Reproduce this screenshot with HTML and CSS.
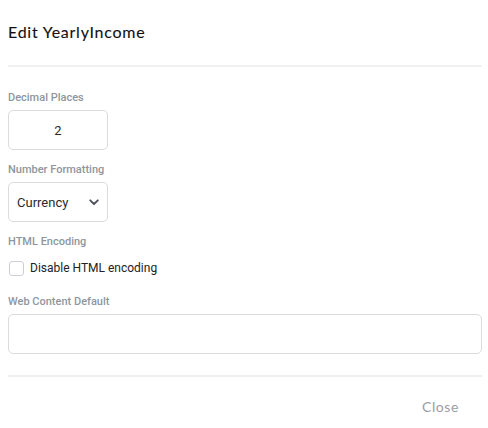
FILE: index.html
```html
<!DOCTYPE html>
<html>
<head>
<meta charset="utf-8">
<link rel="stylesheet" href="styles.css">
</head>
<body>
<div class="dialog">
  <div class="header">
    <h1 class="title">Edit YearlyIncome</h1>
  </div>
  <div class="content">
    <div class="field">
      <label class="label">Decimal Places</label>
      <div class="input small center">2</div>
    </div>
    <div class="field">
      <label class="label">Number Formatting</label>
      <div class="input small select">
        <span>Currency</span>
        <svg class="chev" width="10" height="7" viewBox="0 0 10 7"><path d="M1.2 1.3 L5 5 L8.8 1.3" fill="none" stroke="#4b5058" stroke-width="1.8" stroke-linecap="round" stroke-linejoin="round"/></svg>
      </div>
    </div>
    <div class="field">
      <label class="label">HTML Encoding</label>
      <div class="check-row">
        <span class="checkbox"></span>
        <span class="check-text">Disable HTML encoding</span>
      </div>
    </div>
    <div class="field last">
      <label class="label">Web Content Default</label>
      <div class="input wide"></div>
    </div>
  </div>
  <div class="footer">
    <button class="close">Close</button>
  </div>
</div>
</body>
</html>
```
FILE: styles.css
```css
html, body { margin: 0; padding: 0; background: #fff; }
.dialog { width: 474px; padding: 0 6px 0 8px; }
.header { padding: 22px 0 23px; border-bottom: 2px solid #f0f0f0; }
.title { margin: 0; font-family: "Lato", "Open Sans", sans-serif; font-weight: 400; font-size: 16px; letter-spacing: 0.75px; line-height: 20px; color: #111; -webkit-text-stroke: 0.1px #111; }
.content { padding: 24px 0 21px; border-bottom: 2px solid #f0f0f0; display: flex; flex-direction: column; gap: 13px; }
.field { display: flex; flex-direction: column; gap: 5px; }
.label { font-family: "Roboto", sans-serif; font-size: 11px; font-weight: 500; line-height: 14px; color: #90969d; }
.input { box-sizing: border-box; height: 40px; border: 1px solid #dcdcdc; border-radius: 5px; font-family: "Roboto", sans-serif; font-size: 13px; color: #2a2a2a; }
.small { width: 100px; }
.center { display: flex; align-items: center; justify-content: center; }
.select { display: flex; align-items: center; justify-content: space-between; padding: 0 8px 0 8px; }
.wide { width: 474px; }
.check-row { display: flex; align-items: center; gap: 6px; height: 20px; margin-top: 4px; margin-bottom: 4px; padding-left: 1px; }
.checkbox { box-sizing: border-box; width: 15px; height: 15px; border: 1px solid #ccd0d5; border-radius: 3px; }
.check-text { font-family: "Roboto", sans-serif; font-size: 12px; color: #222; }
.footer { display: flex; justify-content: flex-end; padding: 20px 23px 0 0; }
.close { background: none; border: none; padding: 0; font-family: "Lato", "Open Sans", sans-serif; font-size: 14px; letter-spacing: 0.6px; line-height: 20px; color: #9a9ea4; }
```
